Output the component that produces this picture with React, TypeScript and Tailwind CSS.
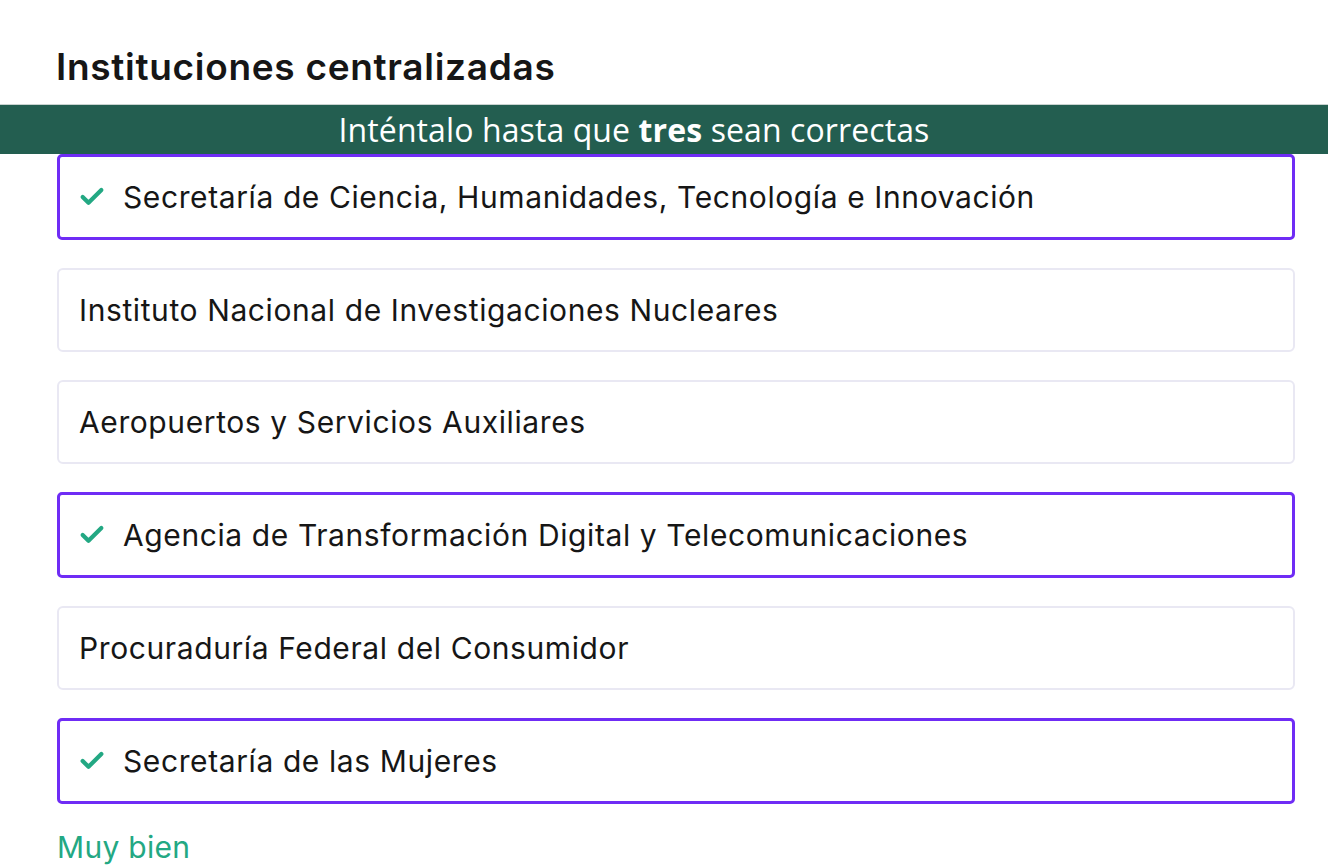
import { Check } from 'lucide-react';

const options = [
  { label: 'Secretaría de Ciencia, Humanidades, Tecnología e Innovación', selected: true },
  { label: 'Instituto Nacional de Investigaciones Nucleares', selected: false },
  { label: 'Aeropuertos y Servicios Auxiliares', selected: false },
  { label: 'Agencia de Transformación Digital y Telecomunicaciones', selected: true },
  { label: 'Procuraduría Federal del Consumidor', selected: false },
  { label: 'Secretaría de las Mujeres', selected: true },
];

export default function App() {
  return (
    <div className="min-h-screen bg-white text-[#161616] font-['Inter',sans-serif]">
      {/* Title */}
      <div className="h-[104px] pl-[56px] pt-[44px]">
        <h1 className="text-[37px] leading-[46px] font-semibold tracking-[0.7px]">
          Instituciones centralizadas
        </h1>
      </div>

      {/* Instruction banner */}
      <div className="h-[50px] bg-[#235e50] border-t border-[#c9d3d0] flex items-center justify-center">
        <p className="font-['Open_Sans',sans-serif] text-[32px] leading-none text-white -ml-[60px] tracking-[0.1px]">
          Inténtalo hasta que <b className="font-bold">tres</b> sean correctas
        </p>
      </div>

      {/* Options */}
      <div className="pl-[57px] pr-[33px] flex flex-col gap-[28px]">
        {options.map((opt) =>
          opt.selected ? (
            <div
              key={opt.label}
              className="h-[86px] flex items-center gap-[17px] pl-[18px] border-[3px] border-[#6f2cf5] rounded-[5px]"
            >
              <Check className="w-[28px] h-[28px] text-[#23a883]" strokeWidth={3.6} />
              <span className="text-[30px] leading-none tracking-[0.6px]">{opt.label}</span>
            </div>
          ) : (
            <div
              key={opt.label}
              className="h-[84px] flex items-center pl-[20px] border-2 border-[#e9e8f3] rounded-[6px]"
            >
              <span className="text-[30px] leading-none tracking-[0.6px]">{opt.label}</span>
            </div>
          )
        )}
      </div>

      <p className="pl-[57px] pt-[28px] text-[30px] leading-none text-[#23a883] tracking-[0.3px]">
        Muy bien
      </p>
    </div>
  );
}
